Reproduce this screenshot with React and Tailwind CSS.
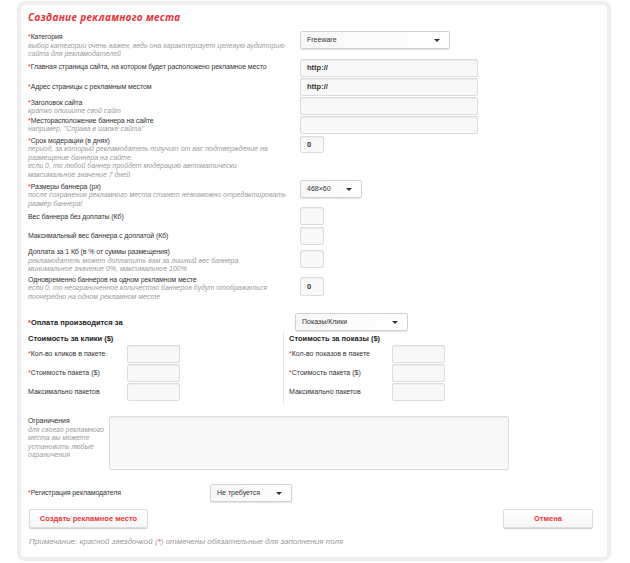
const RED = 'text-[#e8353a]';

function Star() {
  return <span className={RED}>*</span>;
}

function Caret() {
  return (
    <svg width="6" height="3" viewBox="0 0 6 3" className="shrink-0">
      <path d="M0 0h6L3 3z" fill="#333" />
    </svg>
  );
}

function Select({ value, className }) {
  return (
    <div
      className={`flex items-center justify-between rounded-[2px] border border-[#d2d2d2] bg-gradient-to-r from-[#f7f7f7] via-[#fbfbfb] to-white pl-[6px] pr-[9px] text-[7px] text-[#333] shadow-[0_1px_1px_rgba(0,0,0,0.12)] ${className}`}
    >
      <span>{value}</span>
      <Caret />
    </div>
  );
}

function Input({ value, className }) {
  return (
    <div
      className={`flex items-center rounded-[2px] border border-[#dcdcdc] bg-[#f8f8f8] px-[6px] text-[7.5px] font-bold text-[#333] shadow-[inset_0_1px_1px_rgba(0,0,0,0.05)] ${className}`}
    >
      {value}
    </div>
  );
}

function Label({ req, text, hints = [], bold, offset = 'pt-0' }) {
  return (
    <div className={`${offset} leading-[8.5px]`}>
      <div className={bold ? 'text-[7.5px] font-bold text-[#222]' : 'text-[7px] tracking-[-0.1px] text-[#333]'}>
        {req && <Star />}
        {text}
      </div>
      {hints.map((h) => (
        <div key={h} className="text-[7px] italic text-[#9a9a9a]">
          {h}
        </div>
      ))}
    </div>
  );
}

function Row({ h, children, control }) {
  return (
    <div className={`flex ${h}`}>
      <div className="w-[272px] shrink-0">{children}</div>
      <div>{control}</div>
    </div>
  );
}

function PriceCol({ title, rows, labelW, className }) {
  return (
    <div className={className}>
      <div className="h-[11px] text-[7.5px] font-bold leading-[9px] text-[#222]">{title}</div>
      <div className="flex flex-col gap-px">
        {rows.map(([req, t]) => (
          <div key={t} className="flex h-[18px] items-center">
            <div className={`${labelW} shrink-0 text-[7px] text-[#333]`}>
              {req && <Star />}
              {t}
            </div>
            <Input className="h-[18px] w-[53px]" />
          </div>
        ))}
      </div>
    </div>
  );
}

export default function App() {
  return (
    <div className="h-[563px] w-[630px] bg-white pl-[17px] pt-px font-['Liberation_Sans',Arial,sans-serif]">
      <div className="h-[560px] w-[594px] rounded-[8px] border-4 border-[#eeeeee] px-[7px]">
        <div className={`mt-[5px] h-[21px] font-['Open_Sans',sans-serif] text-[10px] font-bold italic leading-[14px] tracking-[0.3px] ${RED}`}>
          Создание рекламного места
        </div>

        <Row
          h="h-[28px]"
          control={<Select value="Freeware" className="h-[18px] w-[150px]" />}
        >
          <Label
            req
            offset="pt-[2px]"
            text="Категория"
            hints={['выбор категории очень важен, ведь она характеризует целевую аудиторию', 'сайта для рекламодателей']}
          />
        </Row>
        <Row h="h-[19px]" control={<Input value="http://" className="h-[18px] w-[178px]" />}>
          <Label req offset="pt-[4px]" text="Главная страница сайта, на котором будет расположено рекламное место" />
        </Row>
        <Row h="h-[19px]" control={<Input value="http://" className="h-[18px] w-[178px]" />}>
          <Label req offset="pt-[5px]" text="Адрес страницы с рекламным местом" />
        </Row>
        <Row h="h-[19px]" control={<Input className="h-[18px] w-[178px]" />}>
          <Label req offset="pt-[1.5px]" text="Заголовок сайта" hints={['кратко опишите свой сайт']} />
        </Row>
        <Row h="h-[20px]" control={<Input className="h-[18px] w-[178px]" />}>
          <Label req offset="pt-[0.5px]" text="Месторасположение баннера на сайте" hints={['например, "Справа в шапке сайта"']} />
        </Row>
        <Row h="h-[44px]" control={<Input value="0" className="h-[17px] w-[24px]" />}>
          <Label
            req
            offset="pt-[0.5px]"
            text="Срок модерации (в днях)"
            hints={[
              'период, за который рекламодатель получит от вас подтверждение на',
              'размещение баннера на сайте.',
              'если 0, то любой баннер пройдет модерацию автоматически',
              'максимальное значение 7 дней',
            ]}
          />
        </Row>
        <Row h="h-[27px]" control={<Select value="468×60" className="h-[18px] w-[62px]" />}>
          <Label
            req
            offset="pt-[2.5px]"
            text="Размеры баннера (px)"
            hints={['после сохранения рекламного места станет невозможно отредактировать', 'размер баннера!']}
          />
        </Row>
        <Row h="h-[20px]" control={<Input className="h-[18px] w-[24px]" />}>
          <Label offset="pt-[5.5px]" text="Вес баннера без доплаты (Кб)" />
        </Row>
        <Row h="h-[23px]" control={<Input className="h-[18px] w-[24px]" />}>
          <Label offset="pt-[4.5px]" text="Максимальный вес баннера с доплатой (Кб)" />
        </Row>
        <Row h="h-[27px]" control={<Input className="h-[18px] w-[24px]" />}>
          <Label
            offset="-mt-[2px]"
            text="Доплата за 1 Кб (в % от суммы размещения)"
            hints={['рекламодатель может доплатить вам за лишний вес баннера', 'минимальное значение 0%, максимальное 100%']}
          />
        </Row>
        <Row h="h-[36px]" control={<Input value="0" className="h-[19px] w-[24px]" />}>
          <Label
            offset="-mt-[1.5px]"
            text="Одновременно баннеров на одном рекламном месте"
            hints={['если 0, то неограниченное количество баннеров будут отображаться', 'поочередно на одном рекламном месте']}
          />
        </Row>
        <div className="flex h-[21px]">
          <div className="w-[267px] shrink-0">
            <Label req bold offset="pt-[5.5px]" text="Оплата производится за" />
          </div>
          <Select value="Показы/Клики" className="h-[18px] w-[113px]" />
        </div>

        <div className="flex h-[70px]">
          <PriceCol
            className="w-[255px] shrink-0"
            labelW="w-[99px]"
            title="Стоимость за клики ($)"
            rows={[
              [true, 'Кол-во кликов в пакете'],
              [true, 'Стоимость пакета ($)'],
              [false, 'Максимально пакетов'],
            ]}
          />
          <div className="-mt-[2px] w-px bg-[#e6e6e6]" />
          <PriceCol
            className="pl-[5px]"
            labelW="w-[103px]"
            title="Стоимость за показы ($)"
            rows={[
              [true, 'Кол-во показов в пакете'],
              [true, 'Стоимость пакета ($)'],
              [false, 'Максимально пакетов'],
            ]}
          />
        </div>

        <div className="mt-[12px] flex h-[68px]">
          <div className="w-[81px] shrink-0">
            <Label
              offset="pt-[1px]"
              text="Ограничения"
              hints={['для своего рекламного', 'места вы можете', 'установить любые', 'ограничения']}
            />
          </div>
          <div className="h-[54px] w-[400px] rounded-[2px] border border-[#dcdcdc] bg-[#f8f8f8] shadow-[inset_0_1px_1px_rgba(0,0,0,0.05)]" />
        </div>

        <div className="flex h-[25px] items-start">
          <div className="w-[182px] shrink-0">
            <Label req offset="pt-[5px]" text="Регистрация рекламодателя" />
          </div>
          <Select value="Не требуется" className="h-[18px] w-[82px]" />
        </div>

        <div className="flex h-[28px] items-start justify-between pl-px pr-[7px]">
          <button className={`h-[19px] w-[119px] rounded-[2px] border border-[#dcdcdc] bg-gradient-to-b from-white to-[#f6f6f6] text-[7.5px] font-bold shadow-[0_1px_1px_rgba(0,0,0,0.2)] ${RED}`}>
            Создать рекламное место
          </button>
          <button className={`h-[19px] w-[90px] rounded-[2px] border border-[#dcdcdc] bg-gradient-to-b from-white to-[#f6f6f6] text-[7.5px] font-bold shadow-[0_1px_1px_rgba(0,0,0,0.2)] ${RED}`}>
            Отмена
          </button>
        </div>

        <div className="pl-px text-[8px] italic leading-[9px] text-[#999]">
          Примечание: красной звездочкой (<span className={RED}>*</span>) отмечены обязательные для заполнения поля
        </div>
      </div>
    </div>
  );
}
